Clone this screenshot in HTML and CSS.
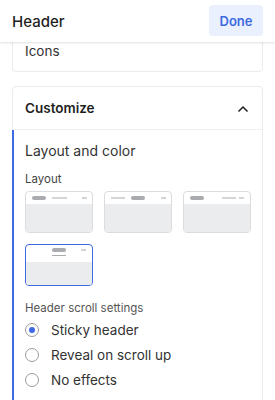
FILE: index.html
```html
<!DOCTYPE html>
<html lang="en">
<head>
  <meta charset="UTF-8">
  <meta name="viewport" content="width=device-width, initial-scale=1.0">
  <title>Header</title>
  <link rel="stylesheet" href="styles.css">
</head>
<body>
  <div class="topbar">
    <span class="topbar-title">Header</span>
    <button class="done-btn">Done</button>
  </div>

  <div class="content">
    <div class="card icons-card">
      <span>Icons</span>
    </div>

    <div class="card">
      <div class="card-head">
        <span class="card-title">Customize</span>
        <svg class="chevron" width="12" height="8" viewBox="0 0 12 8">
          <path d="M1.5 6.5 L6 2 L10.5 6.5" fill="none" stroke="#1f1f1f" stroke-width="1.5"/>
        </svg>
      </div>

      <div class="card-body">
        <div class="section-title">Layout and color</div>
        <div class="label">Layout</div>

        <div class="thumbs">
          <div class="thumb">
            <svg width="66" height="40" viewBox="0 0 66 40">
              <rect x="0" y="12" width="66" height="28" fill="#ebecee"/>
              <rect x="6" y="4" width="14" height="4" rx="2" fill="#a9abae"/>
              <rect x="26" y="5.5" width="15" height="1" fill="#a9abae"/>
              <rect x="56" y="5.5" width="5" height="1" fill="#a9abae"/>
            </svg>
          </div>
          <div class="thumb">
            <svg width="66" height="40" viewBox="0 0 66 40">
              <rect x="0" y="12" width="66" height="28" fill="#ebecee"/>
              <rect x="6" y="5.5" width="14" height="1" fill="#a9abae"/>
              <rect x="26" y="4" width="14" height="4" rx="2" fill="#a9abae"/>
              <rect x="56" y="5.5" width="5" height="1" fill="#a9abae"/>
            </svg>
          </div>
          <div class="thumb">
            <svg width="66" height="40" viewBox="0 0 66 40">
              <rect x="0" y="12" width="66" height="28" fill="#ebecee"/>
              <rect x="6" y="4" width="14" height="4" rx="2" fill="#a9abae"/>
              <rect x="38" y="5.5" width="14" height="1" fill="#a9abae"/>
              <rect x="55" y="5.5" width="5" height="1" fill="#a9abae"/>
            </svg>
          </div>
          <div class="thumb selected">
            <svg width="66" height="40" viewBox="0 0 66 40">
              <rect x="0" y="17" width="66" height="23" fill="#ebecee"/>
              <rect x="26" y="3" width="14" height="4" rx="2" fill="#a9abae"/>
              <rect x="26" y="10" width="14" height="1" fill="#a9abae"/>
              <rect x="55" y="4.5" width="5" height="1" fill="#a9abae"/>
            </svg>
          </div>
        </div>

        <div class="label scroll-label">Header scroll settings</div>

        <div class="radio-list">
          <label class="radio-row">
            <span class="radio checked"></span>
            <span>Sticky header</span>
          </label>
          <label class="radio-row">
            <span class="radio"></span>
            <span>Reveal on scroll up</span>
          </label>
          <label class="radio-row">
            <span class="radio"></span>
            <span>No effects</span>
          </label>
        </div>
      </div>
    </div>
  </div>
</body>
</html>
```

FILE: styles.css
```css
body {
  margin: 0;
  padding: 0;
  width: 275px;
  height: 400px;
  overflow: hidden;
  background-color: #fff;
  font-family: Inter, "Noto Sans", sans-serif;
  color: #1f1f1f;
}

/* top bar */
.topbar {
  position: relative;
  z-index: 2;
  height: 42px;
  display: flex;
  align-items: center;
  justify-content: space-between;
  padding: 0 12px;
  background-color: #fff;
  box-shadow: 0 1px 2px rgba(0, 0, 0, 0.12);
}

.topbar-title {
  font-size: 15px;
  font-weight: 500;
}

.done-btn {
  width: 54px;
  height: 31px;
  border: none;
  border-radius: 4px;
  background-color: #eaf0fd;
  color: #3e6ae1;
  font-family: inherit;
  font-size: 13px;
  font-weight: 600;
  padding: 0;
  margin-top: -1px;
}

.content {
  padding: 0 12px;
}

/* cards */
.card {
  border: 1px solid #ebebeb;
  border-radius: 4px;
  margin-bottom: 14px;
}

.icons-card {
  position: relative;
  z-index: 1;
  margin-top: -13px;
  height: 41px;
  display: flex;
  align-items: center;
  padding: 0 12px;
  font-size: 13.5px;
  color: #333;
}

.card-head {
  height: 42px;
  display: flex;
  align-items: center;
  justify-content: space-between;
  padding: 0 13px 0 12px;
  border-bottom: 1px solid #f0f0f0;
}

.card-title {
  font-size: 13.5px;
  font-weight: 600;
}

.chevron {
  margin-top: 1px;
}

.card-body {
  margin-left: -1px;
  border-left: 2px solid #3e6ae1;
  padding: 12px 12px 20px 11px;
}

.section-title {
  font-size: 14px;
  line-height: 18px;
  color: #333;
}

.label {
  font-size: 11.5px;
  color: #444;
  margin-top: 12px;
  line-height: 14px;
}

.thumbs {
  display: grid;
  grid-template-columns: 68px 68px 68px;
  gap: 11px;
  margin-top: 5px;
}

.thumb {
  width: 66px;
  height: 40px;
  border: 1px solid #dcdcde;
  border-radius: 4px;
  overflow: hidden;
}

.thumb svg {
  display: block;
}

.thumb.selected {
  border: 1.5px solid #3e6ae1;
  width: 66px;
  height: 40px;
}

.scroll-label {
  margin-top: 15px;
  color: #555;
}

.radio-list {
  margin-top: 2px;
}

.radio-row {
  display: flex;
  align-items: center;
  height: 25px;
  font-size: 13.5px;
  color: #333;
}

.radio {
  width: 12px;
  height: 12px;
  border: 1px solid #9a9a9a;
  border-radius: 50%;
  margin-right: 12px;
  display: flex;
  align-items: center;
  justify-content: center;
}

.radio.checked::after {
  content: "";
  width: 6px;
  height: 6px;
  border-radius: 50%;
  background-color: #3e6ae1;
}
```
